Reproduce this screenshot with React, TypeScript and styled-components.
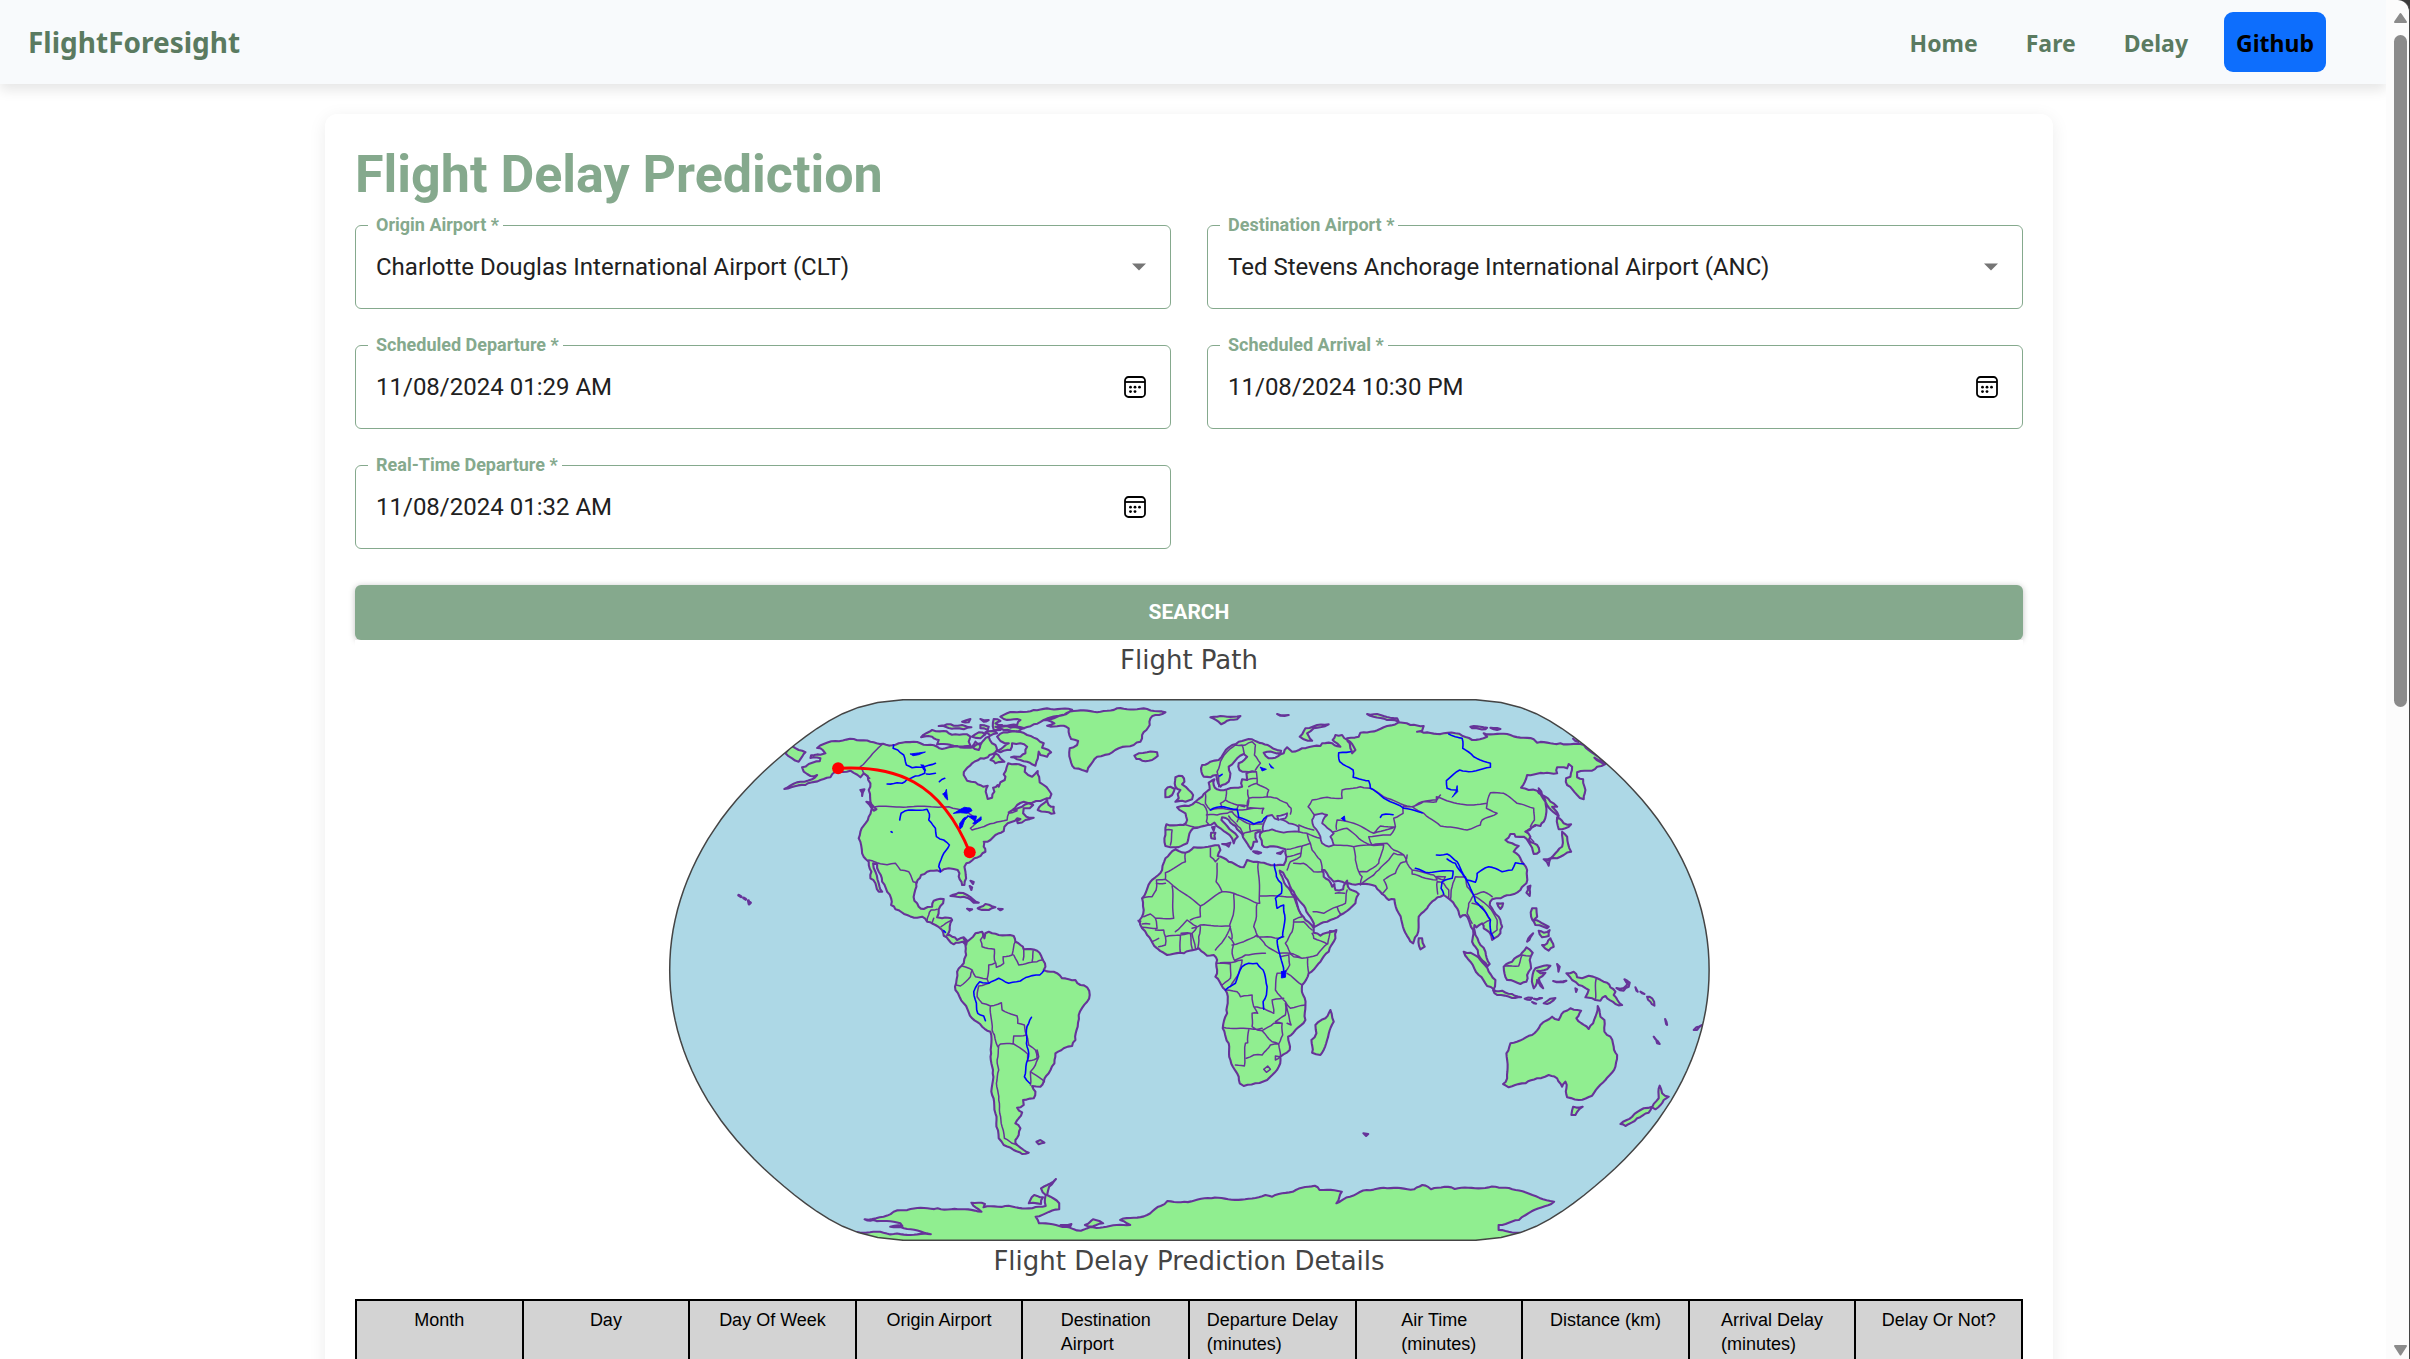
import React from 'react';
import styled, { createGlobalStyle, css } from 'styled-components';

/* ---------- map data ---------- */

// Each sheet is one part of the world: origin x, origin y, x scale, y scale.
const sheets: Record<string, [number, number, number, number]> = {
  na: [760, 690, 1 / 3, 1 / 3],
  gr: [900, 695, 1 / 3, 1 / 3],
  sa: [920, 880, 1 / 3, 1 / 3],
  ea: [1120, 690, 1 / 3, 1 / 3],
  as: [1400, 690, 1 / 3, 1 / 3],
  oc: [1440, 900, 1 / 3, 1 / 3],
  an: [660, 1120, 0.676, 1 / 3],
};

type Point = [number, number];

const toPoints = (line: string): Point[] =>
  line.split('|').flatMap((part) => {
    const [name, body] = part.split(':');
    const [ox, oy, sx, sy] = sheets[name.trim()];
    return body
      .replace('z', '')
      .trim()
      .split(/\s+/)
      .map((pair): Point => {
        const [x, y] = pair.split(',').map(Number);
        return [ox + x * sx, oy + y * sy];
      });
  });

// Breaks long stretches into short ones with a small sideways step, as a coast has.
const roughen = (points: Point[], amount: number): Point[] => {
  const out: Point[] = [];
  for (let i = 0; i < points.length - 1; i += 1) {
    const [ax, ay] = points[i];
    const [bx, by] = points[i + 1];
    const length = Math.hypot(bx - ax, by - ay) || 1;
    const steps = Math.max(1, Math.round(length / 3.5));
    out.push([ax, ay]);
    for (let s = 1; s < steps; s += 1) {
      const t = s / steps;
      const noise = Math.sin((ax + s * 7.3) * 12.99 + ay * 78.23) * amount;
      out.push([ax + (bx - ax) * t - ((by - ay) / length) * noise, ay + (by - ay) * t + ((bx - ax) / length) * noise]);
    }
  }
  out.push(points[points.length - 1]);
  return out;
};

const toPath = (lines: string[], amount = 0): string =>
  lines
    .map((line) => {
      const closed = line.trim().endsWith('z');
      const points = toPoints(line);
      const shape = roughen(closed ? [...points, points[0]] : points, amount);
      return `M${shape.map(([x, y]) => `${x.toFixed(1)} ${y.toFixed(1)}`).join('L')}${closed ? 'Z' : ''}`;
    })
    .join('');

// Edge of the globe in the Natural Earth projection.
const globeEdge = (() => {
  const right: Point[] = [];
  for (let deg = 90; deg >= -90; deg -= 3) {
    const p = (deg * Math.PI) / 180;
    const p2 = p * p;
    const p4 = p2 * p2;
    const x = Math.PI * (0.8707 - 0.131979 * p2 + p4 * (-0.013791 + p4 * (0.003971 * p2 - 0.001529 * p4)));
    const y = p * (1.007226 + p2 * (0.015085 + p4 * (-0.044475 + 0.028874 * p2 - 0.005916 * p4)));
    right.push([x * 190, -y * 190]);
  }
  const all = [...right, ...right.map(([x, y]): Point => [-x, y]).reverse()];
  return `M${all.map(([x, y]) => `${(1189 + x).toFixed(1)} ${(970 + y).toFixed(1)}`).join('L')}Z`;
})();

const land = [
  // North America
  'na:125,232 145,222 178,214 180,205 150,204 152,196 180,194 195,190 187,180 170,174 190,162 225,153 280,147 330,155 368,161 395,166 425,158 460,155 480,160 500,165 530,170 545,177 565,172 590,168 612,173 640,170 660,160|gr:240,150 250,136 265,125 275,145 285,150 290,165 275,178 262,187 240,190 215,205 195,225 190,240 200,257 225,262 248,275 262,272 256,290 262,312 275,308 282,290 278,278 292,270 295,275 300,262 313,255 315,245 310,238 323,205 345,207 375,215 373,230 383,240 395,245 412,228 416,245 418,262 430,270 445,285 453,297 448,310 420,318 395,323 370,320 350,330 325,352 345,345 365,335 385,325 398,330 388,340 370,340 368,355 378,365 400,368 375,375 352,385 350,378 360,372 350,370 335,380 322,385 312,395 310,408 285,420 270,435 262,440 250,440|na:672,455 670,470 675,485 660,498 642,505 618,520 612,530 615,545 617,565 612,585 605,585 598,568 597,550 592,540 580,537 565,535 550,538 540,545 520,542 500,545 482,555 472,570 468,590 462,610 462,632 475,650 490,657 515,650 520,632 550,627 548,640 535,658 530,682 545,685 572,685 575,690 568,720 560,735 575,740 590,750 610,742 620,752 617,765 607,755 595,758 580,763 565,750 550,737 545,720 525,705 500,695 485,680 470,683 440,675 405,658 392,645 392,625 380,605 365,575 355,545 350,522 338,520 345,545 355,580 365,605 355,605 345,580 330,565 333,545 325,515 305,490 295,445 300,425 325,380 335,352 330,335 325,300 330,280 322,258 310,250 300,262 270,242 225,245 210,262 180,270 135,285 72,297 120,275 155,268 170,255 150,258 140,252 130,245z',
  'na:75,190 95,168 115,180 135,187 125,200 115,215 95,205z',
  'na:318,335 335,345 348,358 340,362z',
  'na:300,300 312,298 305,318z',
  // Arctic islands and Greenland
  'gr:62,127 95,105 130,108 145,115 165,118 200,118 210,125 205,140 210,152 160,152 110,148 115,135 100,130 95,125z',
  'gr:115,93 140,88 160,92 185,90 213,97 190,103 165,100 135,95z',
  'gr:185,80 210,72 205,82z',
  'gr:240,72 265,75 250,80z',
  'gr:240,90 265,95 262,105 240,100z',
  'gr:280,72 300,78 285,85 305,90 285,95 300,105 280,105z',
  'gr:215,125 235,112 255,118 240,130z',
  'gr:215,155 225,140 240,150 235,165z',
  'gr:255,112 275,108 290,115 270,122z',
  'gr:300,65 320,55 350,52 400,45 450,42 515,44 505,52 470,65 430,75 400,88 370,100 330,98 310,92 350,90 360,75 310,72z',
  'gr:290,98 330,95 372,100 355,108 310,105z',
  'gr:290,125 310,112 350,110 380,120 410,132 430,145 425,158 452,172 440,185 420,180 415,170 408,200 405,212 380,200 350,193 332,187 360,185 375,175 380,155 360,145 335,145 330,165 300,172 290,168 310,155 325,145 300,138z',
  'gr:285,175 300,190 312,200 285,205 270,195z',
  'gr:412,345 430,325 440,312 445,330 460,335 462,355 445,352z',
  'gr:430,75 490,60 520,48 600,50 650,40 740,42 795,52 765,60 750,70 748,90 738,105 725,120 720,140 700,150 655,160 625,178 590,185 570,210 560,230 545,225 522,220 510,195 508,160 530,150 533,138 512,132 505,100 490,92 440,92 462,85z',
  'gr:702,182 715,175 740,172 770,172 772,183 755,195 725,197 708,192z',
  // Caribbean and Pacific
  'sa:90,48 115,38 140,45 175,68 160,68 130,50z',
  'sa:172,85 195,72 225,82 205,90 175,87z',
  'sa:140,86 155,88 148,92z',
  'sa:233,86 247,87 240,91z',
  'sa:150,2 160,6 158,12z',
  'sa:148,18 155,22 153,30z',
  'sa:348,785 360,780 372,788 355,793z',
  'sa:654,122 660,124 657,126z',
  // South America
  'sa:130,175 140,185 158,170 165,160 185,155 192,175 195,160 205,155 215,160 235,165 280,168 285,185 300,195 310,208 350,212 365,235 375,260 370,270 400,275 425,295 465,300 480,315 500,322 508,345 500,365 475,405 472,440 465,480 455,498 430,505 405,520 402,550 385,580 370,605 360,620 335,618 345,635 340,655 308,660 310,675 290,683 305,697 295,715 285,730 300,745 295,765 285,780 290,795 310,810 325,818 305,822 280,810 250,795 235,775 228,740 225,700 215,645 217,580 212,520 210,455 185,440 155,415 130,370 105,330 107,310 110,275 130,250 137,225 135,195z',
  // Eurasia and Africa
  'ea:245,225 270,215 295,210 310,190 335,165 355,155 395,148 410,155 425,160 450,170 482,182 480,190 440,185 430,188 445,205 465,203 490,190 500,172 515,185 545,175 600,168 605,160 635,160 660,170 650,160 637,150 645,135 665,135 680,150 700,170 705,180 695,190 690,175 688,160 680,145 715,140 720,128 750,125 800,108 835,97 870,105 910,108 905,122 890,125|as:70,128 130,130 165,130 185,137 215,150 260,140 250,130 330,135 400,148 410,158 480,160 550,165 615,222 590,230 575,242 530,247 530,262 548,268 555,300 550,328 530,315 500,285 497,265 510,260 515,230 505,222 500,235 470,232 470,250 430,250 380,255 362,293 385,300 410,302 430,320 438,355 430,395 420,408 405,405 388,420 375,425 390,440 385,450 410,465 417,485 400,492 390,465 370,440 345,440 342,432 330,432 315,450 335,460 355,468 340,485 360,505 380,540 378,580 360,600 330,615 300,625 275,628 268,645 295,680 305,710 300,730 275,750 272,735 250,715 245,700 228,712 222,705 225,735 240,765 255,785 268,822 262,828 240,805 232,780 215,755 218,720 205,690 195,675 180,682 170,655 150,630 130,615 120,620 105,628 80,655 55,680 50,735 38,760 25,745 5,700 -5,670|ea:822,628 805,630 785,612 765,588 715,582 685,580 665,575 640,575 625,560 612,540 605,540 610,560 625,570 635,590 642,582 645,600 668,598 680,572 688,598 715,612 705,640 660,675 620,695 580,712 575,690 555,655 520,605 495,562 488,548 478,542 488,568 505,595 520,618 535,660 555,690 580,715 580,728 600,737 648,720 645,745 625,785 600,815 565,850 545,885 548,915 555,945 555,990 525,1020 503,1040 508,1080 480,1100 475,1130 440,1170 405,1180 370,1188 358,1180 355,1160 330,1110 325,1060 307,1015 320,970 322,930 315,900 285,860 290,840 290,810 280,795 260,797 235,775 190,790 140,795 110,775 80,735 65,715 58,690 70,660 65,625 90,575 125,540 135,505 165,478 195,488 220,472 295,466 300,480 292,498 325,515 370,532 380,510 410,515 440,522 490,525 498,500 495,478 470,470 440,472 425,465 418,440 425,425 405,430 410,455 400,455 392,478 380,460 365,432 350,418 345,408 325,390 305,382 303,390 320,408 352,440 340,460 335,445 300,415 282,398 262,405 240,410 218,415 205,440 200,460 165,472 150,472 135,468 132,445 138,403 190,405 200,390 195,370 170,352 205,348 225,335 245,320 250,312 262,302 268,298 265,278 282,268 280,285 290,298 320,298 365,290 362,280 365,268 380,270 378,250 405,245 375,245 357,240 355,220 380,200 370,192 350,205 325,230 330,250 325,275 305,285 300,290 290,270 288,255 270,262 250,260 243,245z',
  'ea:165,335 175,325 172,312 180,300 165,290 165,262 185,258 192,275 185,283 205,300 218,315 215,328 195,335z',
  'ea:135,300 150,290 163,297 155,315 135,322z',
  'ea:270,82 300,78 360,78 350,88 320,92 302,103z',
  'ea:538,140 555,115 590,105 625,103 580,115 560,130 575,152 550,148z',
  'ea:740,72 770,72 830,85 835,95 800,90z',
  'ea:470,72 505,75 480,77z',
  'ea:305,462 330,458 325,470z',
  'ea:272,428 285,428 284,447 273,445z',
  'ea:275,412 283,410 280,422z',
  'ea:398,484 422,488 405,489z',
  'ea:470,490 488,483 480,492z',
  'ea:630,960 640,995 620,1050 600,1095 575,1088 573,1050 588,1030 585,1005 615,985z',
  'as:55,745 65,745 73,770 60,778z',
  'as:210,110 260,113 255,118 215,115z',
  'as:270,113 300,117 280,118z',
  'as:582,203 605,215 615,222z',
  'as:518,146 535,155 525,153z',
  // Japan, Philippines, Taiwan
  'as:415,295 425,315 450,335 470,350 455,350 475,378 440,345z',
  'as:470,382 490,400 512,403 495,415 475,418z',
  'as:485,425 500,440 512,485 490,495 470,505 440,510 465,490 485,470z',
  'as:430,508 450,505 445,527z',
  'as:382,590 390,587 388,618 378,608z',
  'as:290,640 308,640 300,657z',
  'as:395,655 408,655 410,680 400,690 425,700 445,710 440,715 405,705 392,680z',
  'as:415,722 430,728 448,720 445,738 425,742z',
  'as:425,765 440,760 450,745 460,770 445,782z',
  'as:380,755 398,730 390,742z',
  // Indonesia and Oceania
  'oc:70,155 90,158 120,180 145,215 165,240 160,268 140,258 115,225 90,185z',
  'oc:158,270 185,272 215,282 242,292 215,294 170,285z',
  'oc:253,296 275,293 270,300z',
  'oc:280,296 305,294 290,299z',
  'oc:310,310 330,296 345,294 320,312z',
  'oc:275,306 287,311 280,310z',
  'oc:190,200 215,185 240,165 258,142 277,158 268,180 272,205 260,225 258,245 240,252 200,240z',
  'oc:280,265 275,235 285,205 300,200 330,197 320,208 290,212 300,220 315,218 295,235 308,265 290,240z',
  'oc:350,192 358,200 354,215z',
  'oc:338,243 378,242 360,246z',
  'oc:405,265 410,268 407,276z',
  'oc:378,220 400,215 410,232 425,235 445,227 470,235 500,248 510,262 525,275 520,285 545,315 525,312 495,288 480,302 465,300 435,292 445,270 415,255 395,240z',
  'oc:528,264 550,264 562,252 552,238 568,248 565,260 550,272z',
  'oc:585,262 592,275 588,272z',
  'oc:600,275 612,282 605,280z',
  'oc:620,290 635,295 642,317 630,305z',
  'oc:674,357 680,375 677,372z',
  'oc:640,410 658,432 650,430z',
  'oc:760,390 768,382 785,375 770,390z',
  'oc:472,318 480,350 492,360 492,395 510,410 520,440 530,465 525,500 495,540 455,587 415,600 380,592 378,565 375,545 365,560 350,535 325,525 290,535 255,550 205,562 188,552 200,535 198,460 210,430 275,405 300,375 335,350 355,360 370,335 390,325 422,332 408,355 445,387 458,370z',
  'oc:398,620 427,620 405,645 393,645z',
  'oc:658,557 665,580 685,590 670,600 645,628 635,622 655,595z',
  'oc:635,620 625,638 590,655 555,678 540,672 575,650 610,625z',
  // Antarctica
  'an:290,336 320,335 345,342 400,343 360,325 340,320 358,318 355,310 315,300 302,298 330,290 345,275 370,267 410,265 440,268 475,275 460,248 480,252 478,262 510,258 550,265 570,258 570,225 563,205 585,177 575,200 572,225 590,250 590,268 555,290 560,310 600,320 622,332 640,322 695,315 680,300 720,285 740,258 750,243 775,245 815,235 865,238 895,225 905,230 940,210 968,197 975,210 1008,215 1000,250 1020,230 1045,210 1075,205 1115,208 1127,195 1140,208 1160,200 1175,207 1235,200 1260,208 1290,225 1322,245 1280,285 1270,300 1240,315 1240,330 1290,342 1300,390 280,390z',
  'an:628,315 640,298 655,310 640,319z',
  'an:592,315 608,312 606,320z',
  'an:545,250 553,225 566,232 563,252z',
  'an:1040,40 1047,42 1044,48z',
];

const hawaii = ['na:-65,616 -58,620', 'na:-50,624 -44,628', 'na:-36,632 -34,642 -30,638'];

const inlandSeas = [
  'ea:427,425 430,400 440,378 455,375 462,385 475,390 470,378 500,370 495,385 480,388 505,400 535,410 535,425 490,428 455,418z',
  'ea:582,375 605,370 620,375 608,390 605,400 622,415 640,430 630,440 640,465 625,470 605,460 600,440 580,410 575,390z',
];

const borders = [
  'na:325,510 350,518 380,524 405,520 420,540 445,545 458,575 470,578',
  'na:345,350 565,350 590,357 620,365 640,380 645,400 630,415 635,420 680,405 700,400 740,390 745,370 770,362',
  'na:368,161 300,230 310,250 328,265',
  'na:500,692 505,675 512,660 530,658',
  'na:520,685 515,698',
  'na:542,710 565,695 575,690',
  'sa:190,160 180,180 185,200 222,208 222,240 228,262 250,250 248,230 275,225 280,200 285,185',
  'sa:125,258 155,270 165,290 200,297 205,255 222,250',
  'sa:155,270 150,290 120,318 107,315',
  'sa:200,297 205,310 175,318 170,350 185,370 210,378 215,450',
  'sa:210,378 243,368 245,390 290,408 292,430 312,435 318,465 280,468 278,492 240,492 232,500 222,465 215,450',
  'sa:235,498 230,540 235,570 228,610 235,660 238,700 245,740 252,775 275,790 290,795',
  'sa:280,492 322,522 322,543 350,535 345,510 325,495 318,465',
  'sa:350,510 355,530 345,555 330,575 372,605',
  'sa:330,575 330,615',
  'sa:280,225 295,255 325,248 350,245 365,240',
  'sa:310,208 308,240',
  'sa:338,212 335,245',
  'ea:295,290 295,260 290,245 300,215 320,185 345,165 365,165 372,192',
  'ea:345,165 375,165 395,155 405,165 402,195 420,220 405,240',
  'ea:408,245 410,280 385,290',
  'ea:378,270 408,265',
  'ea:410,282 445,300 440,320 385,325 382,300',
  'ea:440,320 470,325 500,340 512,355 510,372',
  'ea:385,325 380,355 430,355 425,370',
  'ea:318,300 315,330 350,345 380,348 385,325',
  'ea:255,310 255,340 270,360 305,355 300,340 315,330',
  'ea:225,335 250,345 260,365 258,395 265,403',
  'ea:258,375 290,375 320,370 335,365 355,385 350,395',
  'ea:305,355 350,360 355,345 372,350',
  'ea:325,378 345,400 360,415 370,435',
  'ea:355,385 388,402 390,425 365,432',
  'ea:388,402 425,402',
  'ea:388,425 420,420',
  'ea:355,360 400,355',
  'ea:135,420 155,420 150,465',
  'ea:190,403 232,412',
  'ea:535,425 560,430 570,460 545,468 500,478',
  'ea:535,405 580,420',
  'ea:560,430 600,445',
  'ea:570,460 575,480 600,510 605,540',
  'ea:640,465 700,470 705,510 715,545 725,560 720,585',
  'ea:545,468 540,500 510,515 500,540',
  'ea:520,520 550,520 580,545 605,545',
  'ea:500,500 540,490',
  'ea:578,665 610,670 650,650 660,672',
  'ea:680,600 675,640 650,650',
  'ea:645,610 672,610',
  'ea:700,470 750,465 790,465 780,500 775,520 740,545 715,545',
  'ea:720,585 760,555 775,540 805,510 820,490 850,495',
  'ea:785,612 800,595 790,570 825,550 840,520 855,515 860,495',
  'ea:582,375 563,350 575,330 620,322 665,325 665,300 720,290 750,295 800,325 850,345 848,370 820,385 825,410 780,408 760,430 700,400 650,390 648,418',
  'ea:640,425 680,415 715,445 750,465',
  'ea:760,430 825,410 810,435 745,440 755,465 800,460 820,480',
  'ea:850,345 880,350 905,335 950,330 960,315',
  'ea:820,480 850,495 860,520 875,540',
  'as:10,350 35,350 70,335 108,335 108,320 150,335 200,345 260,340 270,308 310,310 350,340 400,355 402,390 390,410',
  'as:35,350 70,370 120,408 200,420 240,405 245,390 290,370 258,355 260,342',
  'as:35,540 100,555 110,570 75,565 35,552z',
  'as:105,560 135,560 130,570z',
  'as:112,612 110,575 130,580 145,600 145,625',
  'as:150,630 155,590 165,560 195,560 200,590 220,615 205,640 200,670 215,700',
  'as:220,615 250,605 275,620',
  'as:225,620 265,650 290,690 290,720 270,735',
  'as:215,640 245,650 270,690 250,700',
  'as:375,425 405,408',
  'as:390,445 400,455',
  'ea:195,488 195,515 135,548 135,568 108,570 107,600 95,620 65,625',
  'ea:135,580 108,580',
  'ea:155,588 160,685 105,685',
  'ea:135,568 240,648 305,605 340,610 410,640',
  'ea:290,520 287,575 305,605',
  'ea:270,475 270,500 285,515 295,505',
  'ea:413,520 418,640 410,640 408,680 400,710 410,735',
  'ea:418,618 520,620',
  'ea:340,610 340,665 328,705 335,745',
  'ea:240,648 240,680 210,690',
  'ea:215,715 240,705 325,708',
  'ea:240,710 235,740 232,775',
  'ea:330,710 310,750 285,780',
  'ea:325,740 340,760 335,790 345,815 300,818',
  'ea:335,765 370,755 410,735 435,765 475,790 510,790',
  'ea:345,810 375,795 435,790',
  'ea:410,740 440,740 475,745 490,740',
  'ea:520,620 545,680 520,690 515,725 495,760 510,790 545,805 590,795 620,762 580,745 575,730',
  'ea:520,695 550,695 575,720',
  'ea:565,850 562,805',
  'ea:545,805 520,800 505,790',
  'ea:500,850 545,885',
  'ea:480,800 505,795 508,825 495,845 470,850 465,900 495,935 510,955 555,945',
  'ea:315,900 350,905 360,920 395,915 400,950 430,955 460,970 455,930 490,925',
  'ea:400,950 412,970 395,970 395,1010 410,1020 425,1022',
  'ea:307,1012 400,1018 425,1015',
  'ea:385,1020 382,1058 375,1060 372,1128 345,1125',
  'ea:378,1105 400,1095 425,1095 450,1065 475,1062',
  'ea:425,1022 455,1055 475,1062 487,1035 485,1000 460,1000 425,1022',
  'ea:485,1000 465,995 495,975 495,940 505,975 512,1005 500,1000',
  'ea:475,1062 480,1100 465,1110 465,1098 478,1100',
  'ea:430,1138 442,1128 450,1138 438,1147z',
  'ea:290,820 330,822 330,865 305,885',
  'ea:345,815 365,810 355,850 330,890',
  'ea:70,680 90,672 105,685 110,715 65,712',
  'ea:65,702 88,702',
  'ea:105,720 130,720 135,740 135,765 115,770',
  'ea:135,740 180,735 180,790',
  'ea:165,725 200,690 230,710 215,730 180,735',
  'ea:182,730 210,730 215,775',
  'ea:215,730 225,775',
  'ea:95,755 115,745',
  'ea:648,725 628,722 622,762',
  'oc:195,198 235,198 245,165 268,168',
  'oc:467,237 465,300',
];

const rivers = [
  'na:400,165 398,175 412,180 420,188 430,195 438,225 455,233 490,232 493,250 465,258 440,268 425,280 410,278 380,282',
  'na:490,232 525,220',
  'na:498,252 525,250',
  'na:537,275 553,265',
  'na:418,390 422,370 445,360 500,358 507,372 505,390 525,415 528,440 550,450 567,465 545,500 535,530 540,545',
  'na:392,425 395,427',
  'sa:370,272 358,285 325,290 300,303 265,310 235,295 205,310 178,305 160,335 168,370 172,400 190,408 195,422',
  'sa:333,412 325,430 318,450 318,490 325,520 318,550 312,590 328,610',
  'sa:70,152 75,157',
  'ea:462,522 468,560 483,580 483,610 465,625 470,655 490,645 493,675 487,740 470,750 480,800 490,845',
  'ea:315,900 345,880 365,830 385,820 410,820 428,840 440,890 438,915 428,935 430,958',
  'ea:270,360 300,350 350,358 355,382 400,402 425,395 438,380',
  'ea:690,185 655,188 658,215 698,240 698,262 745,272 750,295 800,330 850,355 905,368',
  'ea:780,382 785,374 818,374',
  'ea:298,258 305,253',
  'as:45,535 75,547 158,543 155,565 125,575 122,595 130,612',
  'as:108,495 140,492 170,515 200,570 225,577 230,550 265,530 305,545 335,540 345,518 370,522',
  'as:140,507 165,520 185,550 210,595 225,635 250,660 270,690 272,730 280,745',
  'as:145,132 185,145 187,175 220,200 270,220 270,232 205,245 178,240 138,272 140,295 165,300',
];

const lakes = [
  'na:580,370 600,358 612,352 630,354 635,362 620,370 600,368z',
  'na:597,418 598,400 610,384 625,378 612,392 605,412z',
  'na:622,378 648,378 645,398 640,390z',
  'na:638,400 662,380 662,390 645,402z',
  'na:548,312 555,305 558,298 562,330 556,325z',
  'na:450,192 465,190 495,186 475,194 458,197z',
  'na:482,225 490,225 496,242 490,240z',
  'ea:483,845 497,842 495,862 483,864z',
  'ea:420,232 438,238 425,243z',
  'ea:447,222 460,235 452,233z',
  'ea:663,385 672,378 674,393 668,390z',
  'as:170,288 172,305 155,322 166,305z',
];

/* ---------- page data ---------- */

interface FieldData {
  id: string;
  label: string;
  value: string;
}

const airports: FieldData[] = [
  { id: 'origin', label: 'Origin Airport *', value: 'Charlotte Douglas International Airport (CLT)' },
  { id: 'destination', label: 'Destination Airport *', value: 'Ted Stevens Anchorage International Airport (ANC)' },
];

const dates: FieldData[] = [
  { id: 'sched-dep', label: 'Scheduled Departure *', value: '11/08/2024 01:29 AM' },
  { id: 'sched-arr', label: 'Scheduled Arrival *', value: '11/08/2024 10:30 PM' },
  { id: 'real-dep', label: 'Real-Time Departure *', value: '11/08/2024 01:32 AM' },
];

const columns = [
  ['Month'],
  ['Day'],
  ['Day Of Week'],
  ['Origin Airport'],
  ['Destination', 'Airport'],
  ['Departure Delay', '(minutes)'],
  ['Air Time', '(minutes)'],
  ['Distance (km)'],
  ['Arrival Delay', '(minutes)'],
  ['Delay Or Not?'],
];

/* ---------- styles ---------- */

const GlobalStyle = createGlobalStyle`
  *, *::before, *::after { box-sizing: border-box; }
  body {
    margin: 0;
    background: #fff;
    font-family: Roboto, "Liberation Sans", sans-serif;
    overflow: hidden;
  }
`;

const Window = styled.div`
  display: grid;
  grid-template-columns: minmax(0, 1fr) 24px;
  grid-template-rows: 100vh;
  overflow: hidden;
  background: #fff;
`;

const Page = styled.div`
  overflow: hidden;
`;

const NavBar = styled.nav`
  display: flex;
  align-items: center;
  justify-content: space-between;
  height: 84px;
  padding: 0 60px 0 28px;
  background: #f8fafc;
  box-shadow: 0 6px 12px rgba(0, 0, 0, 0.1);
  font-family: "Segoe UI", "Noto Sans", "Open Sans", sans-serif;
  font-weight: 700;
`;

const Brand = styled.a`
  color: #5a7a60;
  font-size: 28px;
  line-height: 42px;
  text-decoration: none;
`;

const NavLinks = styled.div`
  display: flex;
  align-items: center;
  gap: 24px;
`;

const NavLink = styled.a<{ $primary?: boolean }>`
  padding: 13px 12px 11px;
  border-radius: 9px;
  color: #5a7a60;
  font-size: 23px;
  line-height: 36px;
  text-decoration: none;
  ${({ $primary }) =>
    $primary &&
    css`
      background: #0d6efd;
      color: #000;
    `}
`;

const Card = styled.main`
  max-width: 1728px;
  margin: 30px auto 0;
  padding: 30px;
  border-radius: 12px;
  background: #fff;
  box-shadow: 0 4px 18px rgba(0, 0, 0, 0.08);
`;

const Content = styled.div`
  padding-right: 8px;
`;

const Title = styled.h1`
  margin: 0;
  color: #85a98d;
  font-size: 52px;
  font-weight: 700;
  line-height: 62px;
`;

const FormGrid = styled.form`
  display: grid;
  grid-template-columns: 1fr 1fr;
  gap: 24px 36px;
  margin-top: 7px;
`;

const Field = styled.fieldset`
  display: flex;
  min-width: 0;
  height: 96px;
  margin: 0;
  padding: 0 12px;
  border: 1px solid #85a98d;
  border-radius: 6px;
`;

const Legend = styled.legend`
  padding: 0 4px 0 8px;
  color: #85a98d;
  font-size: 18px;
  font-weight: 700;
  line-height: 24px;
`;

const Control = styled.div`
  display: flex;
  flex: 1;
  align-items: center;
  padding: 0 12px 12px 8px;
`;

const controlText = css`
  flex: 1;
  min-width: 0;
  height: 48px;
  padding: 0;
  border: 0;
  outline: 0;
  background: transparent;
  color: #212121;
  font-family: inherit;
  font-size: 24px;
`;

const Select = styled.select`
  ${controlText}
  appearance: none;
`;

const Input = styled.input`
  ${controlText}
`;

const IconButton = styled.button`
  display: flex;
  padding: 0;
  border: 0;
  background: none;
  color: #000;
`;

const SearchButton = styled.button`
  grid-column: 1 / -1;
  height: 55px;
  margin-top: 12px;
  padding: 0 0 2px;
  border: 0;
  border-radius: 6px;
  background: #85a98d;
  box-shadow: 0 1px 6px rgba(0, 0, 0, 0.25);
  color: #fff;
  font-family: inherit;
  font-size: 21px;
  font-weight: 700;
`;

const Results = styled.section`
  position: relative;
  background: #fff;
`;

const ChartTitle = styled.h2`
  margin: 0;
  color: #444;
  font-family: Verdana, "DejaVu Sans", sans-serif;
  font-size: 26px;
  font-weight: 400;
  line-height: 41px;
  text-align: center;
`;

const WorldMap = styled.svg`
  display: block;
  width: 63%;
  min-width: 1042px;
  height: 542px;
  margin: 18px auto 0;
`;

const Details = styled.table`
  width: 100%;
  margin-top: 17px;
  border-collapse: collapse;
  table-layout: fixed;
  font-family: Arial, "Liberation Sans", sans-serif;
  font-size: 18px;
  line-height: 24px;
`;

const HeadCell = styled.th`
  height: 84px;
  padding: 7px 0 0;
  border: 2px solid #000;
  background: #d3d3d3;
  color: #000;
  font-weight: 400;
  text-align: center;
  vertical-align: top;
`;

const HeadText = styled.span`
  display: inline-block;
  text-align: left;
`;

const ScrollCorner = styled.aside`
  background: #3a3a3a;
`;

const ScrollTrack = styled.div`
  display: flex;
  flex-direction: column;
  align-items: center;
  gap: 12px;
  height: 100%;
  padding: 12px 0 3px 5px;
  border-right: 1px solid #444;
  border-top-right-radius: 12px;
  background: #fcfcfc;
`;

const ScrollThumb = styled.div`
  width: 13px;
  height: 50%;
  margin-bottom: auto;
  border-radius: 7px;
  background: #8b8b8b;
`;

/* ---------- components ---------- */

const Caret = () => (
  <svg width="14" height="8" viewBox="0 0 14 8" aria-hidden="true">
    <path d="M0 0.500h14L7 7.500z" fill="#757575" />
  </svg>
);

const CalendarIcon = () => (
  <svg width="22" height="22" viewBox="0 0 22 22" fill="none" aria-hidden="true">
    <rect x="1" y="1" width="20" height="20" rx="3.5" stroke="currentColor" strokeWidth="1.8" />
    <path d="M1 6h20" stroke="currentColor" strokeWidth="1.8" />
    <g fill="currentColor">
      <circle cx="6.5" cy="11.2" r="1.4" />
      <circle cx="11" cy="11.2" r="1.4" />
      <circle cx="15.5" cy="11.2" r="1.4" />
      <circle cx="6.5" cy="15.6" r="1.4" />
      <circle cx="11" cy="15.6" r="1.4" />
    </g>
  </svg>
);

const ScrollArrow = ({ down }: { down?: boolean }) => (
  <svg width="15" height="11" viewBox="0 0 15 11" aria-hidden="true">
    <path
      d={down ? 'M2 1h11L7.5 9.5z' : 'M2 10h11L7.5 2z'}
      fill="#8b8b8b"
      stroke="#8b8b8b"
      strokeWidth="2"
      strokeLinejoin="round"
    />
  </svg>
);

const FlightMap = () => (
  <WorldMap viewBox="668 699 1042 542" role="img" aria-label="Flight path from CLT to ANC">
    <defs>
      <clipPath id="globe">
        <path d={globeEdge} />
      </clipPath>
    </defs>
    <path d={globeEdge} fill="#add8e6" />
    <g clipPath="url(#globe)" strokeLinejoin="round" strokeLinecap="round">
      <path d={toPath(land, 0.9)} fill="#90ee90" stroke="#663399" strokeWidth="2.1" />
      <path d={toPath(borders, 0.5)} fill="none" stroke="#663399" strokeWidth="1.5" />
      <path d={toPath(hawaii)} fill="none" stroke="#663399" strokeWidth="3" />
      <path d={toPath(inlandSeas, 0.6)} fill="#add8e6" stroke="#663399" strokeWidth="1.8" />
      <path d={toPath(lakes)} fill="#00f" stroke="#00f" strokeWidth="0.9" />
      <path d={toPath(rivers, 0.6)} fill="none" stroke="#00f" strokeWidth="1.6" />
    </g>
    <path d={globeEdge} fill="none" stroke="#444" strokeWidth="1.5" />
    <path d="M837.7 768.3C893.3 765 940 780 969.3 852.3" fill="none" stroke="#f00" strokeWidth="3" />
    <circle cx="837.7" cy="768.3" r="6" fill="#f00" />
    <circle cx="969.3" cy="852.3" r="6" fill="#f00" />
  </WorldMap>
);

export default function App() {
  return (
    <>
      <GlobalStyle />
      <Window>
        <Page>
          <NavBar>
            <Brand href="#">FlightForesight</Brand>
            <NavLinks>
              <NavLink href="#home">Home</NavLink>
              <NavLink href="#fare">Fare</NavLink>
              <NavLink href="#delay">Delay</NavLink>
              <NavLink href="#github" $primary>
                Github
              </NavLink>
            </NavLinks>
          </NavBar>
          <Content>
            <Card>
              <Title>Flight Delay Prediction</Title>
              <FormGrid onSubmit={(event) => event.preventDefault()}>
                {airports.map((field) => (
                  <Field key={field.id}>
                    <Legend>
                      <label htmlFor={field.id}>{field.label}</label>
                    </Legend>
                    <Control>
                      <Select id={field.id} defaultValue={field.value}>
                        <option>{field.value}</option>
                      </Select>
                      <Caret />
                    </Control>
                  </Field>
                ))}
                {dates.map((field) => (
                  <Field key={field.id}>
                    <Legend>
                      <label htmlFor={field.id}>{field.label}</label>
                    </Legend>
                    <Control>
                      <Input id={field.id} type="text" defaultValue={field.value} />
                      <IconButton type="button" aria-label="Open calendar">
                        <CalendarIcon />
                      </IconButton>
                    </Control>
                  </Field>
                ))}
                <SearchButton type="submit">SEARCH</SearchButton>
              </FormGrid>
              <Results>
                <ChartTitle>Flight Path</ChartTitle>
                <FlightMap />
                <ChartTitle>Flight Delay Prediction Details</ChartTitle>
                <Details>
                  <thead>
                    <tr>
                      {columns.map((lines) => (
                        <HeadCell key={lines.join(' ')} scope="col">
                          <HeadText>
                            {lines.map((line, index) => (
                              <React.Fragment key={line}>
                                {index > 0 && <br />}
                                {line}
                              </React.Fragment>
                            ))}
                          </HeadText>
                        </HeadCell>
                      ))}
                    </tr>
                  </thead>
                </Details>
              </Results>
            </Card>
          </Content>
        </Page>
        <ScrollCorner aria-hidden="true">
          <ScrollTrack>
            <ScrollArrow />
            <ScrollThumb />
            <ScrollArrow down />
          </ScrollTrack>
        </ScrollCorner>
      </Window>
    </>
  );
}
